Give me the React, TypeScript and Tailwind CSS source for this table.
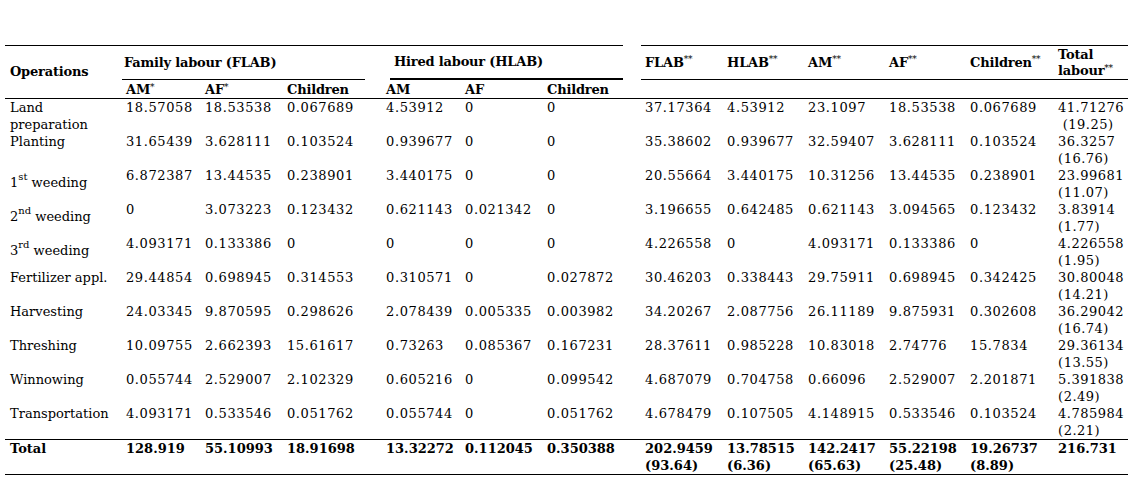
type Row = {
  label: React.ReactNode;
  shift?: boolean;
  left: string[];
  right: string[];
  total: [string, string];
};

const ROWS: Row[] = [
  { label: <>Land<br />preparation</>, left: ['18.57058', '18.53538', '0.067689', '4.53912', '0', '0'], right: ['37.17364', '4.53912', '23.1097', '18.53538', '0.067689'], total: ['41.71276', '\u00a0(19.25)'] },
  { label: 'Planting', left: ['31.65439', '3.628111', '0.103524', '0.939677', '0', '0'], right: ['35.38602', '0.939677', '32.59407', '3.628111', '0.103524'], total: ['36.3257', '(16.76)'] },
  { label: <>1<sup className="text-[10px] -top-[7px]">st</sup> weeding</>, shift: true, left: ['6.872387', '13.44535', '0.238901', '3.440175', '0', '0'], right: ['20.55664', '3.440175', '10.31256', '13.44535', '0.238901'], total: ['23.99681', '(11.07)'] },
  { label: <>2<sup className="text-[10px] -top-[7px]">nd</sup> weeding</>, shift: true, left: ['0', '3.073223', '0.123432', '0.621143', '0.021342', '0'], right: ['3.196655', '0.642485', '0.621143', '3.094565', '0.123432'], total: ['3.83914', '(1.77)'] },
  { label: <>3<sup className="text-[10px] -top-[7px]">rd</sup> weeding</>, shift: true, left: ['4.093171', '0.133386', '0', '0', '0', '0'], right: ['4.226558', '0', '4.093171', '0.133386', '0'], total: ['4.226558', '(1.95)'] },
  { label: 'Fertilizer appl.', left: ['29.44854', '0.698945', '0.314553', '0.310571', '0', '0.027872'], right: ['30.46203', '0.338443', '29.75911', '0.698945', '0.342425'], total: ['30.80048', '(14.21)'] },
  { label: 'Harvesting', left: ['24.03345', '9.870595', '0.298626', '2.078439', '0.005335', '0.003982'], right: ['34.20267', '2.087756', '26.11189', '9.875931', '0.302608'], total: ['36.29042', '(16.74)'] },
  { label: 'Threshing', left: ['10.09755', '2.662393', '15.61617', '0.73263', '0.085367', '0.167231'], right: ['28.37611', '0.985228', '10.83018', '2.74776', '15.7834'], total: ['29.36134', '(13.55)'] },
  { label: 'Winnowing', left: ['0.055744', '2.529007', '2.102329', '0.605216', '0', '0.099542'], right: ['4.687079', '0.704758', '0.66096', '2.529007', '2.201871'], total: ['5.391838', '(2.49)'] },
  { label: 'Transportation', left: ['4.093171', '0.533546', '0.051762', '0.055744', '0', '0.051762'], right: ['4.678479', '0.107505', '4.148915', '0.533546', '0.103524'], total: ['4.785984', '(2.21)'] },
];

const TOTAL_LEFT = ['128.919', '55.10993', '18.91698', '13.32272', '0.112045', '0.350388'];
const TOTAL_RIGHT: [string, string][] = [
  ['202.9459', '(93.64)'], ['13.78515', '(6.36)'], ['142.2417', '(65.63)'],
  ['55.22198', '(25.48)'], ['19.26737', '(8.89)'], ['216.731', ''],
];

const WIDTHS = [117, 79, 82, 99, 79, 82, 80, 18, 82, 81, 81, 81, 88, 74];

const Star = ({ n }: { n: number }) => (
  <sup className="text-[9px] font-normal -top-[4px]">{'*'.repeat(n)}</sup>
);

const RIGHT_HEAD = ['FLAB', 'HLAB', 'AM', 'AF', 'Children'];

export default function App() {
  return (
    <div className="min-h-[497px] bg-white pt-[45px] pl-[5px] text-black font-['DejaVu_Serif',serif]">
      <table className="table-fixed border-separate border-spacing-0 w-[1123px] text-left">
        <colgroup>
          {WIDTHS.map((w, i) => (
            <col key={i} style={{ width: w }} />
          ))}
        </colgroup>
        <thead className="font-bold text-[13px] tracking-[-0.2px]">
          <tr>
            <th rowSpan={2} className="p-0 pl-[5px] border-t border-b border-black align-middle font-bold">
              Operations
            </th>
            <th colSpan={3} className="p-0 border-t border-black align-top font-bold">
              <div className="h-[34px] mr-[17px] border-b border-black flex items-center pl-[2px]">
                Family labour (FLAB)
              </div>
            </th>
            <th colSpan={3} className="p-0 border-t border-black align-top font-bold">
              <div className="h-[34px] ml-[8px] border-b-2 border-black flex items-center pl-[4px]">
                Hired labour (HLAB)
              </div>
            </th>
            <th rowSpan={2} className="p-0 border-b border-black" />
            {RIGHT_HEAD.map((h) => (
              <th key={h} className="p-0 border-t border-b border-black align-top font-bold">
                <div className="h-[33px] flex items-center pl-[4px]">
                  {h}
                  <Star n={2} />
                </div>
              </th>
            ))}
            <th className="p-0 border-t border-b border-black align-top font-bold">
              <div className="h-[33px] flex flex-col justify-center pl-[4px] leading-[16px]">
                <span>Total</span>
                <span>
                  labour
                  <Star n={2} />
                </span>
              </div>
            </th>
          </tr>
          <tr>
            {[
              <>AM<Star n={1} /></>, <>AF<Star n={1} /></>, 'Children', 'AM', 'AF', 'Children',
            ].map((h, i) => (
              <th key={i} className="p-0 pl-[4px] pt-[1px] h-[19px] leading-[17px] border-b border-black align-top font-bold">
                {h}
              </th>
            ))}
            {Array.from({ length: 6 }).map((_, i) => (
              <th key={'e' + i} className="p-0 h-[19px] border-b border-black" />
            ))}
          </tr>
        </thead>
        <tbody className="text-[13px] leading-[17px] font-normal">
          {ROWS.map((r, i) => (
            <tr key={i}>
              <td className={`p-0 pl-[5px] h-[34px] align-top whitespace-nowrap ${r.shift ? 'pt-[7px]' : ''}`}>
                {r.label}
              </td>
              {r.left.map((v, j) => (
                <td key={j} className="p-0 pl-[4px] align-top tracking-[0.6px]">{v}</td>
              ))}
              <td className="p-0" />
              {r.right.map((v, j) => (
                <td key={j} className="p-0 pl-[4px] align-top tracking-[0.6px]">{v}</td>
              ))}
              <td className="p-0 pl-[4px] align-top tracking-[0.5px]">
                <div>{r.total[0]}</div>
                <div>{r.total[1]}</div>
              </td>
            </tr>
          ))}
          <tr className="font-bold">
            <td className="p-0 pl-[5px] h-[35px] border-t border-b border-black align-top">Total</td>
            {TOTAL_LEFT.map((v, j) => (
              <td key={j} className="p-0 pl-[4px] border-t border-b border-black align-top">{v}</td>
            ))}
            <td className="p-0 border-t border-b border-black" />
            {TOTAL_RIGHT.map(([a, b], j) => (
              <td key={j} className="p-0 pl-[4px] border-t border-b border-black align-top">
                <div>{a}</div>
                <div>{b}</div>
              </td>
            ))}
          </tr>
        </tbody>
      </table>
    </div>
  );
}
